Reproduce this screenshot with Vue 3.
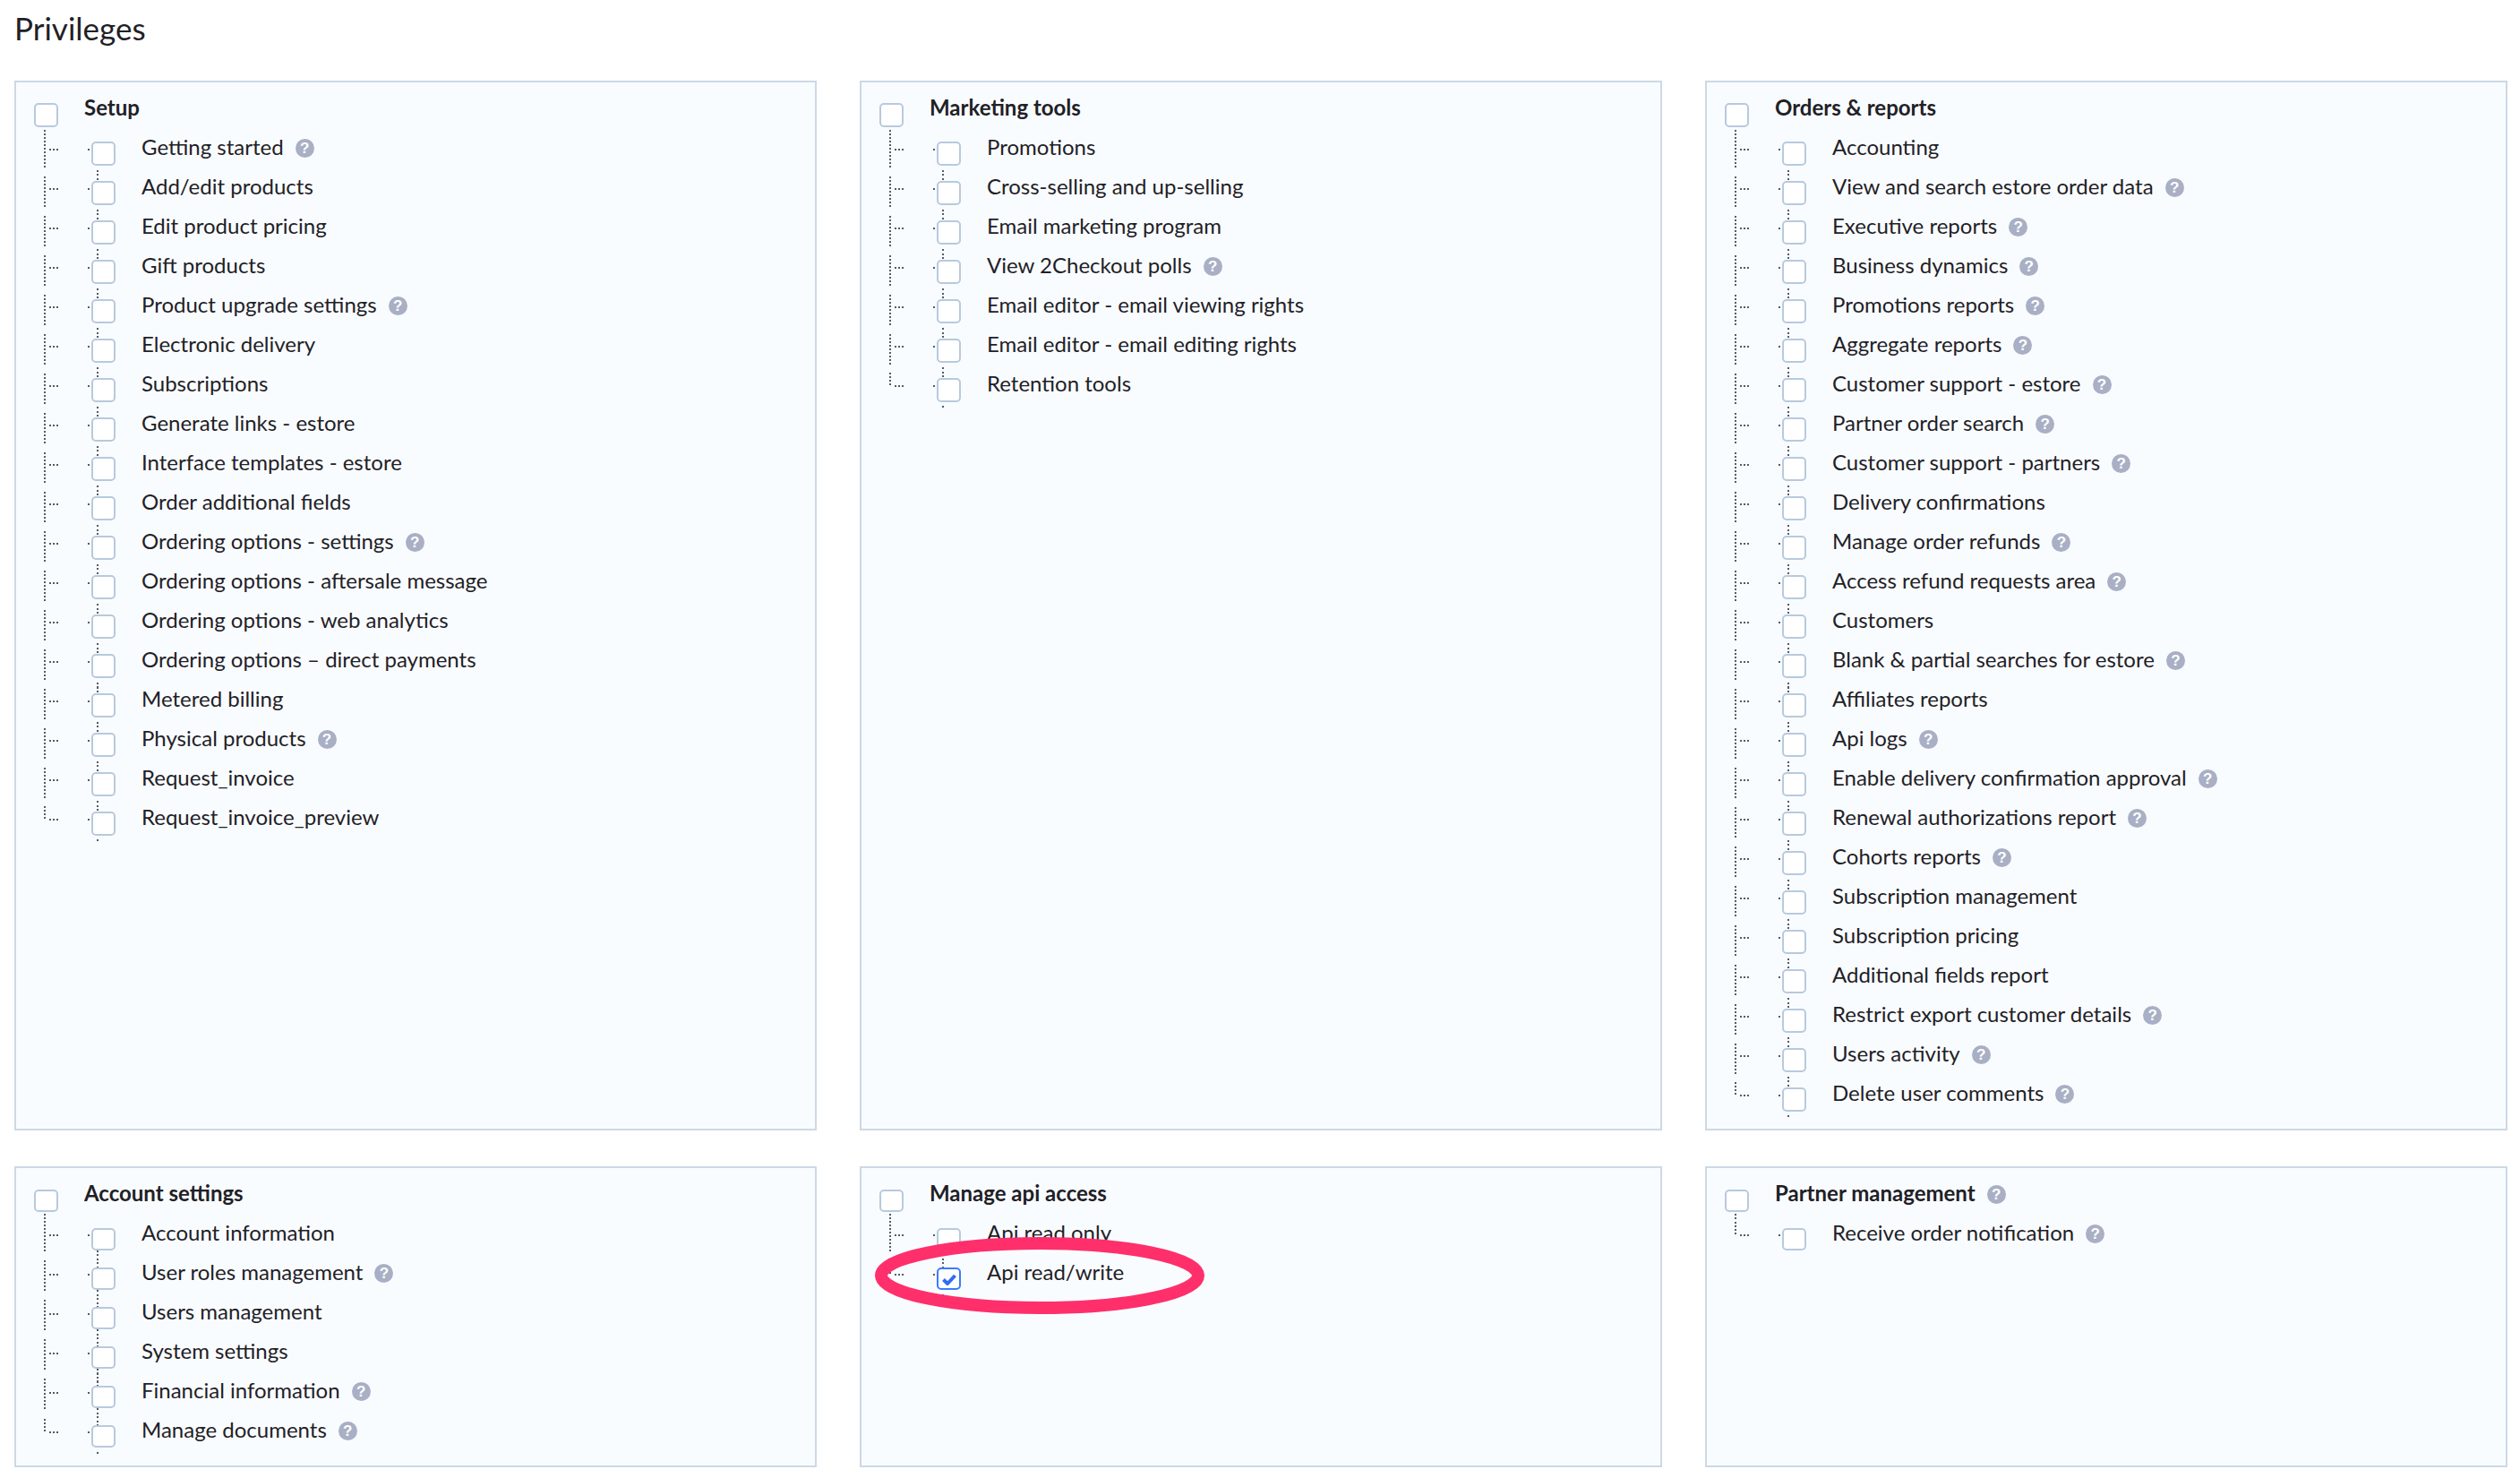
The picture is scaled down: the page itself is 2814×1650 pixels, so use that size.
<script setup>
const panels = [
  { title: 'Setup', items: [['Getting started',1],['Add/edit products'],['Edit product pricing'],['Gift products'],['Product upgrade settings',1],['Electronic delivery'],['Subscriptions'],['Generate links - estore'],['Interface templates - estore'],['Order additional fields'],['Ordering options - settings',1],['Ordering options - aftersale message'],['Ordering options - web analytics'],['Ordering options – direct payments'],['Metered billing'],['Physical products',1],['Request_invoice'],['Request_invoice_preview']] },
  { title: 'Marketing tools', items: [['Promotions'],['Cross-selling and up-selling'],['Email marketing program'],['View 2Checkout polls',1],['Email editor - email viewing rights'],['Email editor - email editing rights'],['Retention tools']] },
  { title: 'Orders & reports', items: [['Accounting'],['View and search estore order data',1],['Executive reports',1],['Business dynamics',1],['Promotions reports',1],['Aggregate reports',1],['Customer support - estore',1],['Partner order search',1],['Customer support - partners',1],['Delivery confirmations'],['Manage order refunds',1],['Access refund requests area',1],['Customers'],['Blank & partial searches for estore',1],['Affiliates reports'],['Api logs',1],['Enable delivery confirmation approval',1],['Renewal authorizations report',1],['Cohorts reports',1],['Subscription management'],['Subscription pricing'],['Additional fields report'],['Restrict export customer details',1],['Users activity',1],['Delete user comments',1]] },
  { title: 'Account settings', short: true, items: [['Account information'],['User roles management',1],['Users management'],['System settings'],['Financial information',1],['Manage documents',1]] },
  { title: 'Manage api access', short: true, circled: true, items: [['Api read only'],['Api read/write',0,1]] },
  { title: 'Partner management', help: true, short: true, single: true, items: [['Receive order notification',1]] },
]
</script>

<template>
  <div class="page">
    <h1 class="heading">Privileges</h1>
    <div class="grid">
      <section v-for="p in panels" :key="p.title" class="panel" :class="{ short: p.short, single: p.single }">
        <div class="head">
          <span class="box"></span>
          <span class="title">{{ p.title }}</span>
          <span v-if="p.help" class="help">?</span>
        </div>
        <ul class="list">
          <li v-for="(it, i) in p.items" :key="it[0]" class="item" :class="{ last: i === p.items.length - 1 }">
            <span class="tree-v"></span>
            <span class="tree-h"></span>
            <span class="tree-dot"></span>
            <span class="tree-sub"></span>
            <span class="box" :class="{ checked: it[2] }">
              <svg v-if="it[2]" viewBox="0 0 16 13" class="tick"><path d="M1.5 6.5 L6 11 L14.5 2" /></svg>
            </span>
            <span class="label">{{ it[0] }}</span>
            <span v-if="it[1]" class="help">?</span>
          </li>
        </ul>
        <svg v-if="p.circled" class="ring" viewBox="0 0 368 86"><ellipse cx="184" cy="43" rx="177" ry="36" /></svg>
      </section>
    </div>
  </div>
</template>

<style scoped>
.page {
  width: 2814px;
  height: 1650px;
  background: #fff;
  color: #1f2126;
  font-family: Lato, "Liberation Sans", sans-serif;
  overflow: hidden;
  box-sizing: border-box;
  padding: 0 16px;
}
.heading {
  margin: 0;
  height: 90px;
  padding-top: 9px;
  box-sizing: border-box;
  font-size: 35px;
  line-height: 44px;
  font-weight: 400;
}
.grid {
  display: grid;
  grid-template-columns: repeat(3, 896px);
  grid-template-rows: 1172px 336px;
  column-gap: 48px;
  row-gap: 40px;
}
.panel {
  position: relative;
  border: 2px solid #ccd9e5;
  background: #f9fcff;
  box-sizing: border-box;
  padding: 6px 0 0 20px;
}
.head {
  position: relative;
  display: flex;
  height: 43px;
  align-items: center;
  font-size: 24px;
  font-weight: 700;
}
.head .box {
  margin: 17px 29px 0 0;
}
.head::after {
  content: "";
  position: absolute;
  left: 11px;
  top: 47px;
  width: 2px;
  height: 8px;
  background: repeating-linear-gradient(to bottom, #555c66 0 2px, transparent 2px 4px);
}
.short .head::after {
  top: 41px;
  height: 12px;
}
.list {
  list-style: none;
  margin: 0;
  padding: 0;
}
.item {
  position: relative;
  display: flex;
  align-items: center;
  height: 44px;
  font-size: 24px;
}
.box {
  position: relative;
  z-index: 1;
  flex: none;
  box-sizing: border-box;
  width: 27px;
  height: 27px;
  border: 2px solid #b7cadd;
  border-radius: 5px;
  background: #fff;
  display: flex;
  align-items: center;
  justify-content: center;
}
.item .box {
  margin: 17px 29px 0 64px;
}
.short .box {
  height: 25px;
}
.box.checked {
  border-color: #3b7bff;
}
.tick {
  width: 16px;
  height: 13px;
  margin-top: 1px;
  fill: none;
  stroke: #2f6df0;
  stroke-width: 4;
}
.help {
  flex: none;
  margin-left: 13px;
  width: 21px;
  height: 21px;
  margin-top: 4px;
  border-radius: 50%;
  background: #a9afc4;
  color: #fff;
  font: 700 17px/21px "Liberation Sans", sans-serif;
  text-align: center;
}
.tree-v,
.tree-h,
.tree-dot,
.tree-sub {
  position: absolute;
}
.tree-v {
  left: 11px;
  top: 12px;
  width: 2px;
  height: 34px;
  background: repeating-linear-gradient(to bottom, #555c66 0 2px, transparent 2px 4px);
}
.short .tree-v {
  top: 10px;
}
.last .tree-v,
.short .last .tree-v {
  top: 11px;
  height: 16px;
}
.tree-h {
  left: 17px;
  top: 25px;
  width: 12px;
  height: 2px;
  background: repeating-linear-gradient(to right, #555c66 0 2px, transparent 2px 4px);
}
.tree-dot {
  left: 60px;
  top: 25px;
  width: 2px;
  height: 2px;
  background: #555c66;
}
.single .tree-dot {
  width: 6px;
  background: repeating-linear-gradient(to right, #555c66 0 2px, transparent 2px 4px);
}
.tree-sub {
  left: 70px;
  top: 49px;
  width: 2px;
  height: 14px;
  background: repeating-linear-gradient(to bottom, #555c66 0 2px, transparent 2px 4.5px);
}
.short .tree-sub {
  top: 43px;
  height: 26px;
}
.last .tree-sub,
.short .last .tree-sub {
  top: 48px;
  height: 2px;
}
.single .tree-sub,
.single .last .tree-sub {
  display: none;
}
.ring {
  position: absolute;
  left: 15px;
  top: 77px;
  width: 368px;
  height: 86px;
  z-index: 2;
  fill: none;
  stroke: #ff2f6b;
  stroke-width: 14;
}
</style>
